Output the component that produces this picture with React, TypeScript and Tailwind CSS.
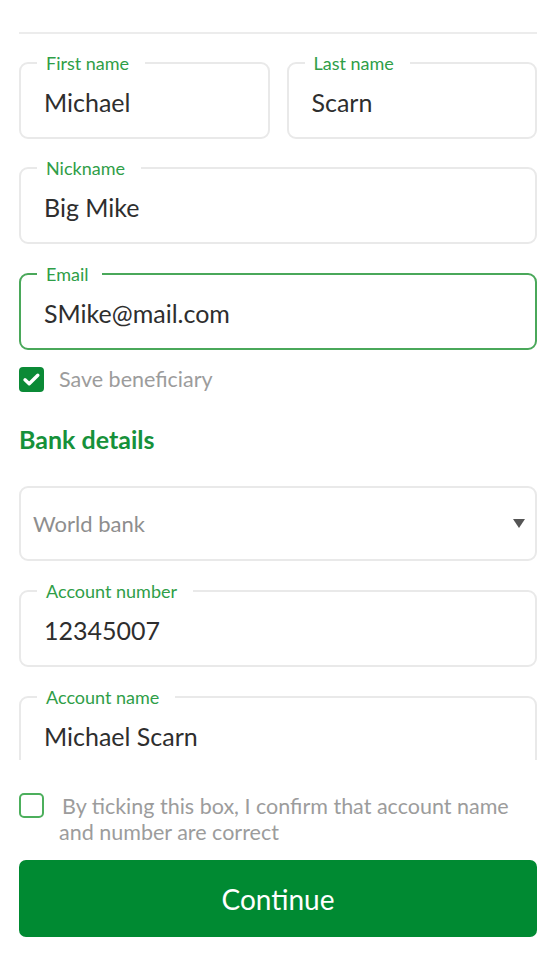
import { ReactNode } from "react";

function OutlinedField({
  label,
  value,
  active = false,
  gap = "pr-[16px]",
}: {
  label: string;
  value: string;
  active?: boolean;
  gap?: string;
}) {
  return (
    <fieldset
      className={`min-w-0 rounded-[9px] border-2 pl-[16px] pb-[20px] ${
        active ? "border-[#4aa85a]" : "border-[#e9e9e9]"
      }`}
    >
      <legend className={`pl-[9px] ${gap} text-[18px] leading-[20px] text-[#2f9e48]`}>{label}</legend>
      <div className="mt-[14px] ml-[7px] h-[30px] text-[25px] leading-[30px] text-[#2e2e2e] whitespace-nowrap">
        {value}
      </div>
    </fieldset>
  );
}

function Check({ checked, children }: { checked: boolean; children: ReactNode }) {
  return (
    <div className="flex items-start">
      {checked ? (
        <div className="flex h-[25px] w-[25px] shrink-0 items-center justify-center rounded-[4px] bg-[#0b8a36]">
          <svg width="25" height="25" viewBox="0 0 25 25" fill="none">
            <path d="M6 12.8l4.2 4L18.8 8.2" stroke="white" strokeWidth="3.4" strokeLinecap="round" strokeLinejoin="round" />
          </svg>
        </div>
      ) : (
        <div className="h-[25px] w-[25px] shrink-0 rounded-[5px] border-2 border-[#4caf5c]" />
      )}
      {children}
    </div>
  );
}

export default function App() {
  return (
    <div className="flex h-[962px] flex-col bg-white font-['Lato','Noto_Sans',sans-serif]">
      {/* Scrollable form */}
      <div className="h-[760px] shrink-0 overflow-hidden pl-[19px] pr-[21px]">
        <div className="mt-[32px] h-[2px] bg-[#ececec]" />

        <div className="mt-[19px] grid grid-cols-2 gap-x-[17px]">
          <OutlinedField label="First name" value="Michael" />
          <OutlinedField label="Last name" value="Scarn" />
        </div>

        <div className="mt-[19px]">
          <OutlinedField label="Nickname" value="Big Mike" />
        </div>

        <div className="mt-[20px]">
          <OutlinedField label="Email" value="SMike@mail.com" active gap="pr-[14px]" />
        </div>

        <div className="mt-[17px]">
          <Check checked>
            <span className="ml-[15px] text-[21.5px] leading-[25px] text-[#9c9c9c]">Save beneficiary</span>
          </Check>
        </div>

        <h2 className="mt-[33px] text-[25px] leading-[29px] font-bold text-[#16913a]">Bank details</h2>

        <div className="mt-[32px] flex h-[75px] items-center justify-between rounded-[9px] border-2 border-[#e9e9e9] pl-[12px] pr-[10px]">
          <span className="text-[22px] text-[#8e8e8e]">World bank</span>
          <svg width="12" height="9" viewBox="0 0 12 9">
            <path d="M0 0h12L6 9z" fill="#555" />
          </svg>
        </div>

        <div className="mt-[20px]">
          <OutlinedField label="Account number" value="12345007" />
        </div>

        <div className="mt-[20px]">
          <OutlinedField label="Account name" value="Michael Scarn" />
        </div>
      </div>

      {/* Footer */}
      <div className="pl-[19px] pr-[21px] pt-[33px]">
        <Check checked={false}>
          <p className="ml-[15px] indent-[3px] text-[21.5px] leading-[26px] text-[#9c9c9c]">
            By ticking this box, I confirm that account name
            <br />
            and number are correct
          </p>
        </Check>

        <button className="mt-[15px] flex h-[77px] w-full items-center justify-center rounded-[7px] bg-[#008a32] text-[28px] text-white">
          Continue
        </button>
      </div>
    </div>
  );
}
